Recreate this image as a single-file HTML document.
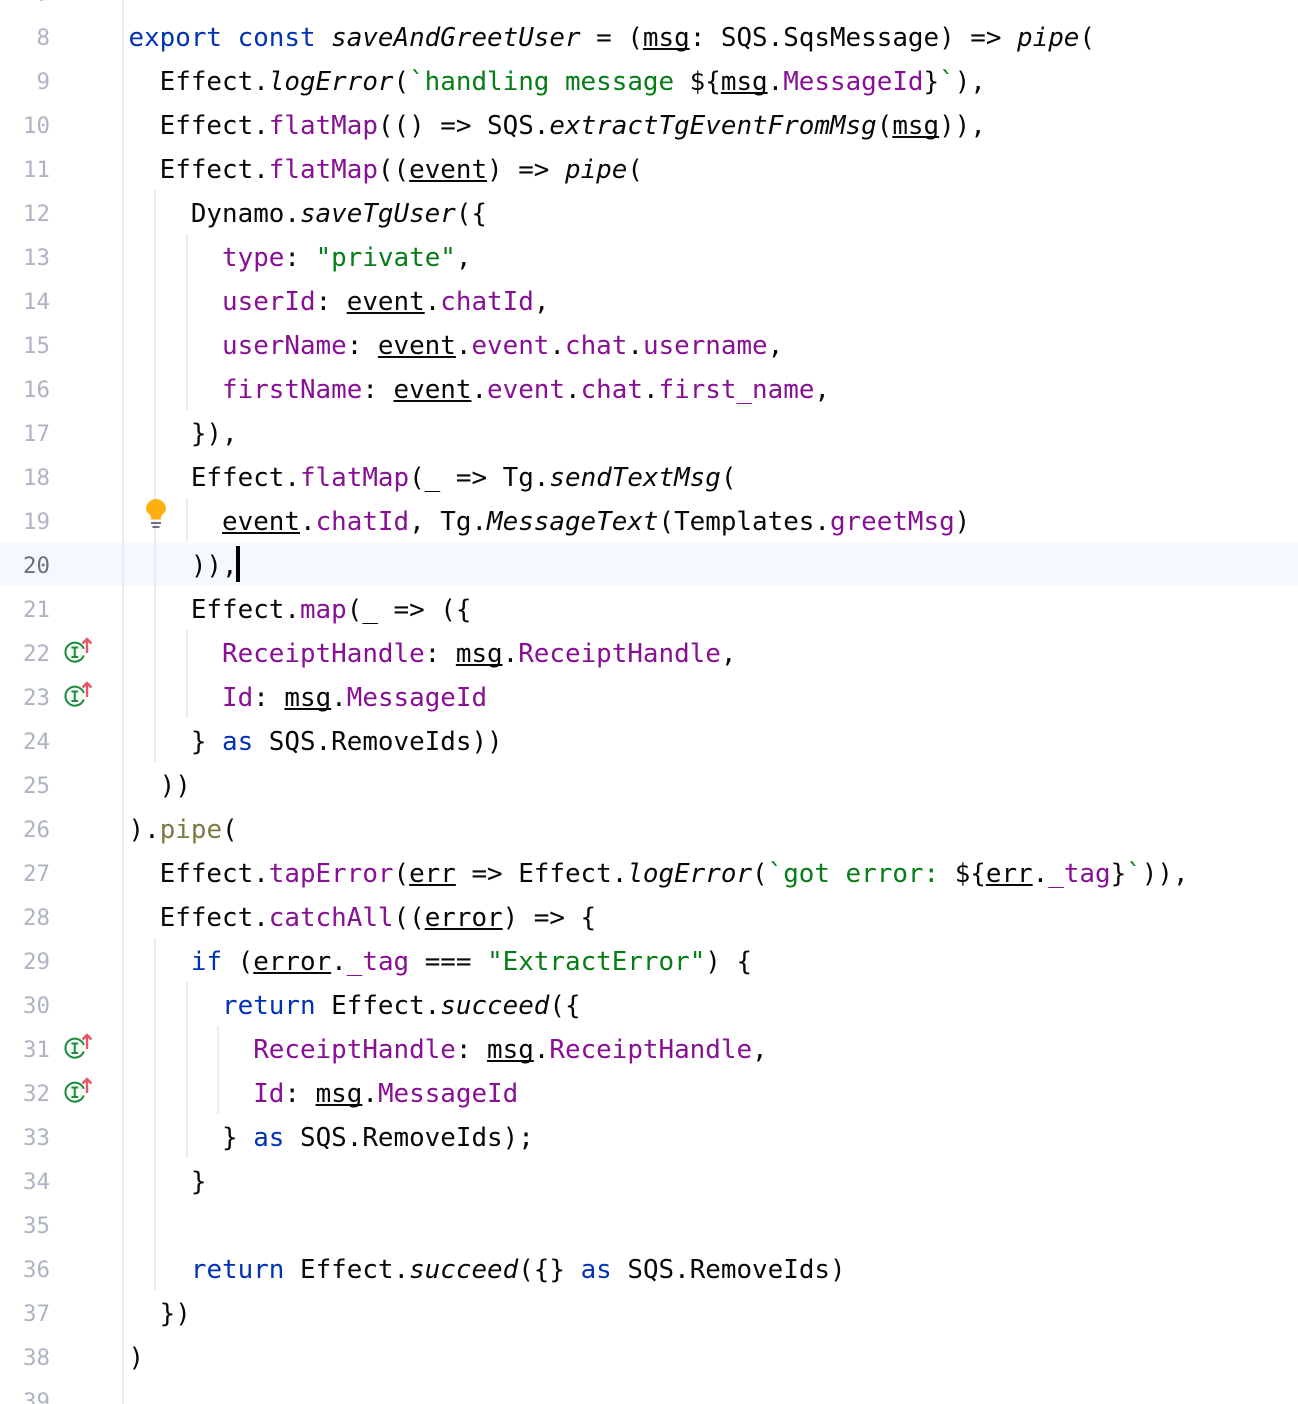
<!DOCTYPE html>
<html><head><meta charset="utf-8"><style>
html,body{margin:0;padding:0;background:#fff}
#p{position:relative;width:1298px;height:1404px;overflow:hidden;background:#fff;font-family:"DejaVu Sans Mono","Liberation Mono",monospace}
#t{position:absolute;left:-0.5px;top:1px;width:1298px;height:1404px}
.l{position:absolute;left:129px;height:44px;line-height:44px;font-size:25.9px;color:#080808;white-space:pre}
.n{position:absolute;left:0;width:50px;text-align:right;height:44px;line-height:44px;font-size:22.4px;color:#aeb3c2;white-space:pre}
.g{position:absolute;width:2px;background:#ebecf0}
.k{color:#0033b3}.p{color:#871094}.s{color:#067d17}.i{font-style:italic}.o{color:#7a7a43}
u{text-decoration:underline;text-decoration-thickness:2px;text-underline-offset:2px;text-decoration-skip-ink:none}
svg{position:absolute}
</style></head><body><div id="p">
<div style="position:absolute;left:0;top:543px;width:1298px;height:43px;background:#f5f8fe"></div>
<div class="g" style="left:122px;top:0;height:1404px"></div>
<div class="g" style="left:154px;top:190px;height:572px"></div>
<div class="g" style="left:186px;top:234px;height:176px"></div>
<div class="g" style="left:186px;top:498px;height:44px"></div>
<div class="g" style="left:186px;top:630px;height:88px"></div>
<div class="g" style="left:154px;top:938px;height:352px"></div>
<div class="g" style="left:186px;top:982px;height:176px"></div>
<div class="g" style="left:217px;top:1026px;height:88px"></div>
<div class="n" style="top:-28px">7</div><div class="n" style="top:16px">8</div><div class="n" style="top:60px">9</div><div class="n" style="top:104px">10</div><div class="n" style="top:148px">11</div><div class="n" style="top:192px">12</div><div class="n" style="top:236px">13</div><div class="n" style="top:280px">14</div><div class="n" style="top:324px">15</div><div class="n" style="top:368px">16</div><div class="n" style="top:412px">17</div><div class="n" style="top:456px">18</div><div class="n" style="top:500px">19</div><div class="n" style="top:544px;color:#6c707e">20</div><div class="n" style="top:588px">21</div><div class="n" style="top:632px">22</div><div class="n" style="top:676px">23</div><div class="n" style="top:720px">24</div><div class="n" style="top:764px">25</div><div class="n" style="top:808px">26</div><div class="n" style="top:852px">27</div><div class="n" style="top:896px">28</div><div class="n" style="top:940px">29</div><div class="n" style="top:984px">30</div><div class="n" style="top:1028px">31</div><div class="n" style="top:1072px">32</div><div class="n" style="top:1116px">33</div><div class="n" style="top:1160px">34</div><div class="n" style="top:1204px">35</div><div class="n" style="top:1248px">36</div><div class="n" style="top:1292px">37</div><div class="n" style="top:1336px">38</div><div class="n" style="top:1380px">39</div>
<div id="t">
<div class="l" style="top:15px"><span class="k">export const</span> <span class="i">saveAndGreetUser</span> = (<u>msg</u>: SQS.SqsMessage) =&gt; <span class="i">pipe</span>(</div>
<div class="l" style="top:59px">  Effect.<span class="i">logError</span>(<span class="s">`handling message </span>${<u>msg</u>.<span class="p">MessageId</span>}<span class="s">`</span>),</div>
<div class="l" style="top:103px">  Effect.<span class="p">flatMap</span>(() =&gt; SQS.<span class="i">extractTgEventFromMsg</span>(<u>msg</u>)),</div>
<div class="l" style="top:147px">  Effect.<span class="p">flatMap</span>((<u>event</u>) =&gt; <span class="i">pipe</span>(</div>
<div class="l" style="top:191px">    Dynamo.<span class="i">saveTgUser</span>({</div>
<div class="l" style="top:235px">      <span class="p">type</span>: <span class="s">"private"</span>,</div>
<div class="l" style="top:279px">      <span class="p">userId</span>: <u>event</u>.<span class="p">chatId</span>,</div>
<div class="l" style="top:323px">      <span class="p">userName</span>: <u>event</u>.<span class="p">event</span>.<span class="p">chat</span>.<span class="p">username</span>,</div>
<div class="l" style="top:367px">      <span class="p">firstName</span>: <u>event</u>.<span class="p">event</span>.<span class="p">chat</span>.<span class="p">first_name</span>,</div>
<div class="l" style="top:411px">    }),</div>
<div class="l" style="top:455px">    Effect.<span class="p">flatMap</span>(_ =&gt; Tg.<span class="i">sendTextMsg</span>(</div>
<div class="l" style="top:499px">      <u>event</u>.<span class="p">chatId</span>, Tg.<span class="i">MessageText</span>(Templates.<span class="p">greetMsg</span>)</div>
<div class="l" style="top:543px">    )),</div>
<div class="l" style="top:587px">    Effect.<span class="p">map</span>(_ =&gt; ({</div>
<div class="l" style="top:631px">      <span class="p">ReceiptHandle</span>: <u>msg</u>.<span class="p">ReceiptHandle</span>,</div>
<div class="l" style="top:675px">      <span class="p">Id</span>: <u>msg</u>.<span class="p">MessageId</span></div>
<div class="l" style="top:719px">    } <span class="k">as</span> SQS.RemoveIds))</div>
<div class="l" style="top:763px">  ))</div>
<div class="l" style="top:807px">).<span class="o">pipe</span>(</div>
<div class="l" style="top:851px">  Effect.<span class="p">tapError</span>(<u>err</u> =&gt; Effect.<span class="i">logError</span>(<span class="s">`got error: </span>${<u>err</u>.<span class="p">_tag</span>}<span class="s">`</span>)),</div>
<div class="l" style="top:895px">  Effect.<span class="p">catchAll</span>((<u>error</u>) =&gt; {</div>
<div class="l" style="top:939px">    <span class="k">if</span> (<u>error</u>.<span class="p">_tag</span> === <span class="s">"ExtractError"</span>) {</div>
<div class="l" style="top:983px">      <span class="k">return</span> Effect.<span class="i">succeed</span>({</div>
<div class="l" style="top:1027px">        <span class="p">ReceiptHandle</span>: <u>msg</u>.<span class="p">ReceiptHandle</span>,</div>
<div class="l" style="top:1071px">        <span class="p">Id</span>: <u>msg</u>.<span class="p">MessageId</span></div>
<div class="l" style="top:1115px">      } <span class="k">as</span> SQS.RemoveIds);</div>
<div class="l" style="top:1159px">    }</div>
<div class="l" style="top:1247px">    <span class="k">return</span> Effect.<span class="i">succeed</span>({} <span class="k">as</span> SQS.RemoveIds)</div>
<div class="l" style="top:1291px">  })</div>
<div class="l" style="top:1335px">)</div>
</div>
<div style="position:absolute;left:236px;top:546px;width:4px;height:36px;background:#000"></div>
<svg style="left:144px;top:497px" width="24" height="33" viewBox="0 0 24 33"><path d="M7 22.500 L7 20 C6.500 17.500 2 15.500 2 12 A10 10 0 0 1 22 12 C22 15.500 17.500 17.500 17 20 L17 22.500 Z" fill="#ffaf0f"/><rect x="7" y="25" width="10" height="2" fill="#6c707e"/><rect x="8.500" y="29" width="7" height="2" fill="#6c707e"/></svg>
<svg style="left:62px;top:637px" width="32" height="30" viewBox="0 0 32 30"><circle cx="12.700" cy="15" r="9.500" fill="#f2fcf3" stroke="none"/><path d="M21.800 11.800 A9.500 9.500 0 1 0 21.800 18.500" fill="none" stroke="#208a3c" stroke-width="2"/><path d="M9.500 10.500h6.500M9.500 20h6.500M12.750 10.500v9.500" fill="none" stroke="#208a3c" stroke-width="2"/><path d="M25 16V2M20.500 6.500l4.500-4.500 4.500 4.500" fill="none" stroke="#e55765" stroke-width="2.400"/></svg>
<svg style="left:62px;top:681px" width="32" height="30" viewBox="0 0 32 30"><circle cx="12.700" cy="15" r="9.500" fill="#f2fcf3" stroke="none"/><path d="M21.800 11.800 A9.500 9.500 0 1 0 21.800 18.500" fill="none" stroke="#208a3c" stroke-width="2"/><path d="M9.500 10.500h6.500M9.500 20h6.500M12.750 10.500v9.500" fill="none" stroke="#208a3c" stroke-width="2"/><path d="M25 16V2M20.500 6.500l4.500-4.500 4.500 4.500" fill="none" stroke="#e55765" stroke-width="2.400"/></svg>
<svg style="left:62px;top:1033px" width="32" height="30" viewBox="0 0 32 30"><circle cx="12.700" cy="15" r="9.500" fill="#f2fcf3" stroke="none"/><path d="M21.800 11.800 A9.500 9.500 0 1 0 21.800 18.500" fill="none" stroke="#208a3c" stroke-width="2"/><path d="M9.500 10.500h6.500M9.500 20h6.500M12.750 10.500v9.500" fill="none" stroke="#208a3c" stroke-width="2"/><path d="M25 16V2M20.500 6.500l4.500-4.500 4.500 4.500" fill="none" stroke="#e55765" stroke-width="2.400"/></svg>
<svg style="left:62px;top:1077px" width="32" height="30" viewBox="0 0 32 30"><circle cx="12.700" cy="15" r="9.500" fill="#f2fcf3" stroke="none"/><path d="M21.800 11.800 A9.500 9.500 0 1 0 21.800 18.500" fill="none" stroke="#208a3c" stroke-width="2"/><path d="M9.500 10.500h6.500M9.500 20h6.500M12.750 10.500v9.500" fill="none" stroke="#208a3c" stroke-width="2"/><path d="M25 16V2M20.500 6.500l4.500-4.500 4.500 4.500" fill="none" stroke="#e55765" stroke-width="2.400"/></svg>
</div></body></html>
